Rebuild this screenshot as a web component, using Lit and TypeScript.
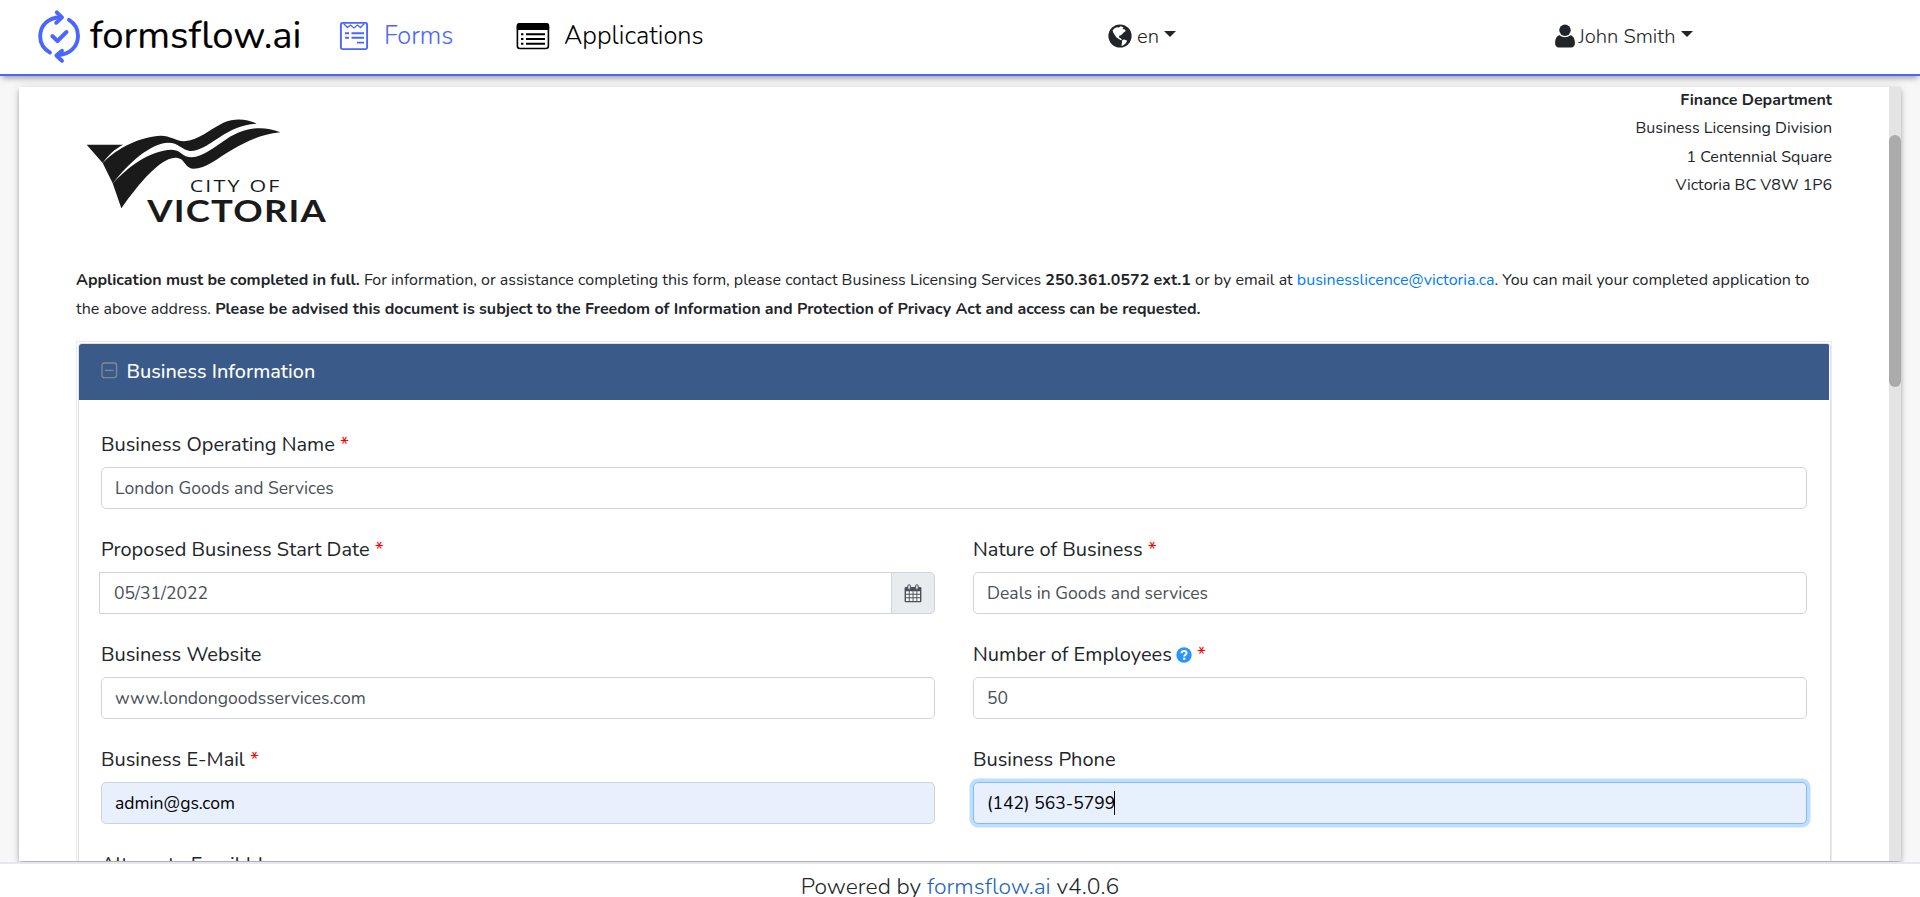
import { LitElement, html, css, svg, nothing } from "lit";
import { customElement, property } from "lit/decorators.js";
import { classMap } from "lit/directives/class-map.js";

const elevation = css`0 2px 4px -1px rgba(0, 0, 0, 0.2), 0 4px 5px 0 rgba(0, 0, 0, 0.14), 0 1px 10px 0 rgba(0, 0, 0, 0.12)`;

const syncLogo = html`<svg width="44" height="56" viewBox="0 0 44 56" fill="none" stroke="#4a66ff" stroke-width="3.9" stroke-linecap="round" stroke-linejoin="round">
  <path d="M13 44.6C6.500 40.800 3.200 35.500 3.200 28.500C3.200 17.500 11 9.800 23 9.200"/>
  <path d="M19.800 4.300L25 9.300L19.200 14.800"/>
  <path d="M32 11.800C37.800 15.500 41 21 41 27.700C41 38.600 33 46.400 21.500 47.200"/>
  <path d="M25 42.800L19.400 47.600L25 52.800"/>
  <path d="M15.300 28L20.500 33L29.500 24"/>
</svg>`;

const formsIcon = html`<svg width="30" height="30" viewBox="0 0 30 30" fill="none" stroke="#4a66ff">
  <rect x="1.900" y="1.900" width="26.200" height="26.200" rx="1.500" stroke-width="1.900"/>
  <path d="M4.500 2.500L8.500 6.500L11.500 4L15 7L18.500 4L21.500 6.500L25.500 2.500" stroke-width="1.300"/>
  <path d="M6 12.200h4M6 16.800h4M12.500 12.200h12.500M12.500 16.800h12.500M18 21.600h7" stroke-width="1.900"/>
</svg>`;

const listIcon = html`<svg width="34" height="28" viewBox="0 0 34 28">
  <rect x="1.400" y="1.900" width="31" height="24.600" rx="2.500" fill="#fff" stroke="#000" stroke-width="1.600"/>
  <path d="M.8 8V4a3 3 0 0 1 3-3h26.400a3 3 0 0 1 3 3v4z"/>
  <path d="M5 12.200h2.400M5 17h2.400M5 21.800h2.400M10 12.200h19M10 17h19M10 21.800h19" stroke="#000" stroke-width="2.100"/>
</svg>`;

const globeIcon = html`<svg width="24" height="24" viewBox="0 0 24 24">
  <circle cx="12" cy="12" r="11.600" fill="#212529"/>
  <path fill="#fff" d="M6.600 4.200L9 3.200L11 3.500L12.500 2.200L15.500 3.200L14.500 5L16.500 5.200L17.800 7L16 8.200L14.500 9.800L13 11.200L11.500 11.500L10.800 13.200L12.500 14.200L14 15.400L12.800 16.300L10.800 15L8.200 13.200L6.500 10.500L5.200 8.500L4.600 6.200z"/>
  <path fill="#fff" d="M14.200 16L16.300 15.400L19.200 16.800L18 19L15.500 21.200L13.500 22L13.800 19.500z"/>
</svg>`;

const userIcon = html`<svg width="20" height="24" viewBox="0 0 20 24" fill="#212529">
  <circle cx="10" cy="6.200" r="5.700"/>
  <path d="M4.600 11.300C6 12.600 7.900 13.300 10 13.300s4-.7 5.400-2C18.600 11.700 19.900 15.500 19.900 19.300c0 2.400-1.500 4.200-3.700 4.200H3.800C1.600 23.500.1 21.700.1 19.300C.1 15.500 1.400 11.700 4.600 11.300z"/>
</svg>`;

const minusIcon = html`<svg width="17" height="17" viewBox="0 0 17 17" fill="none" stroke="#818a91" stroke-width="1.300">
  <rect x="1" y="1" width="14.600" height="14.600" rx="2.300"/><path d="M4 8.300h8.600"/>
</svg>`;

const calendarIcon = html`<svg width="18" height="19" viewBox="0 0 18 19">
  <rect x=".6" y="3" width="16.800" height="15.200" rx="1" fill="#495057"/>
  <path fill="#f5f7f9" d="M2 7.300h2.800v2.500H2zM5.700 7.300h2.900v2.500H5.700zM9.500 7.300h2.900v2.500H9.500zM13.300 7.300H16v2.500h-2.700zM2 10.700h2.800v2.600H2zM5.700 10.700h2.900v2.600H5.700zM9.500 10.700h2.900v2.600H9.500zM13.300 10.700H16v2.600h-2.700zM2 14.200h2.800v2.700H2zM5.700 14.200h2.900v2.700H5.700zM9.500 14.200h2.900v2.700H9.500zM13.300 14.200H16v2.700h-2.700z"/>
  <rect x="3.800" y=".8" width="2.600" height="4.600" rx="1.200" fill="#e9ecef" stroke="#495057" stroke-width="1"/>
  <rect x="11.600" y=".8" width="2.600" height="4.600" rx="1.200" fill="#e9ecef" stroke="#495057" stroke-width="1"/>
</svg>`;

const helpIcon = html`<svg width="16" height="16" viewBox="0 0 16 16">
  <circle cx="8" cy="8" r="7.700" fill="#2b95ff"/>
  <path d="M5.500 6.200C5.600 4.600 6.600 3.900 8 3.900c1.500 0 2.600.8 2.600 2.100C10.600 7.700 8.200 7.700 8.200 9.600" fill="none" stroke="#fff" stroke-width="2"/>
  <rect x="7.100" y="10.700" width="2.200" height="2" fill="#fff"/>
</svg>`;

const cityLogo = html`<svg width="300" height="140" viewBox="0 0 900 420" fill="#1a1a1a">
  <path d="M80 134H190C165 146 146 164 128 189z"/>
  <path d="M128 189C160 155 225 112 300 107C330 106 345 122 372 124C415 121 450 88 490 68C525 53 560 56 590 71C545 74 515 88 480 111C440 137 415 154 390 153C365 149 355 128 325 128C270 130 205 190 158 250z"/>
  <path d="M158 250C205 200 270 151 335 149C365 150 365 172 395 172C430 170 465 140 500 117C545 88 600 72 661 97C600 104 560 124 515 150C470 176 440 206 400 206C370 203 378 173 345 173C300 176 240 245 184 325z"/>
  ${svg`<text class="city" x="389" y="276" textLength="276" lengthAdjust="spacingAndGlyphs">CITY OF</text>
  <text class="name" x="262" y="365" textLength="539" lengthAdjust="spacingAndGlyphs">VICTORIA</text>`}
</svg>`;

@customElement("form-field")
class FormField extends LitElement {
  @property() label = "";
  @property() value = "";
  @property({ type: Boolean }) required = false;
  @property({ type: Boolean }) help = false;
  @property({ type: Boolean }) date = false;
  @property({ type: Boolean }) autofilled = false;
  @property({ type: Boolean }) active = false;

  static styles = css`
    :host { display: flex; flex-direction: column; gap: 7px; height: 105px; box-sizing: border-box; min-width: 0; }
    .label { height: 30px; font-size: 20px; line-height: 30px; white-space: pre; color: #212529; }
    .label svg { vertical-align: -2px; margin-left: 4px; }
    .star { color: #f00; }
    .group { display: flex; height: 42px; }
    .group.date { margin-left: -2px; }
    .control { flex: 1; display: flex; align-items: center; box-sizing: border-box; padding: 0 13px; border: 1px solid #ced4da; border-radius: 5px; background: #fff; color: #495057; font-size: 17.550px; }
    .date .control { border-radius: 0; border-right: 0; padding-left: 14px; }
    .control.autofilled { background: #e8effd; color: #000; }
    .control.active { border-color: #80bdff; box-shadow: 0 0 0 3.500px rgba(0, 123, 255, 0.25); }
    .caret { width: 1px; height: 24px; margin-left: -1px; background: #000; }
    .addon { display: flex; align-items: center; justify-content: center; width: 44px; box-sizing: border-box; border: 1px solid #ced4da; border-radius: 0 5px 5px 0; background: #e9ecef; }
  `;

  render() {
    return html`
      <div class="label">${this.label}${this.help ? helpIcon : nothing}${this.required ? html`<span class="star"> *</span>` : nothing}</div>
      <div class=${classMap({ group: true, date: this.date })}>
        <div class=${classMap({ control: true, autofilled: this.autofilled, active: this.active })}>
          <span>${this.value}</span>${this.active ? html`<span class="caret"></span>` : nothing}
        </div>
        ${this.date ? html`<span class="addon">${calendarIcon}</span>` : nothing}
      </div>`;
  }
}

@customElement("app-root")
class AppRoot extends LitElement {
  static styles = css`
    :host { display: flex; flex-direction: column; height: 897px; overflow: hidden; background: #f7f7f7; color: #212529; font-family: Nunito, Lato, sans-serif; font-size: 16px; font-weight: 395; }
    svg { display: block; flex: none; }
    b { font-weight: 700; }
    header { flex: none; position: relative; z-index: 1; display: flex; align-items: center; box-sizing: border-box; height: 76px; padding: 0 0 3px 37px; background: #fff; border-bottom: 2px solid #4a66ff; box-shadow: 0 4px 6px -2px rgba(0, 0, 0, 0.38); white-space: nowrap; }
    .brand { display: flex; align-items: center; width: 302px; gap: 9px; font-size: 38.300px; color: #000; font-weight: 400; line-height: 50px; -webkit-text-stroke: 0.150px #000; }
    .nav { display: flex; align-items: center; font-size: 25.400px; color: #000; font-weight: 330; }
    .nav.forms { width: 177px; gap: 15px; color: #4a66ff; }
    .nav.apps { width: 592px; gap: 14px; }
    .menu { display: flex; align-items: center; gap: 5px; font-size: 20.200px; padding-top: 1px; font-weight: 345; }
    .menu.lang { width: 446.500px; }
    .menu.user { gap: 4px; }
    .arrow { margin: -4px 0 0 2px; border: 6px solid transparent; border-top-color: #212529; border-bottom: 0; }
    .lang .arrow { margin-left: 0; }
    main { flex: 1; min-height: 0; overflow: hidden; padding: 11px 19px 1px; }
    .panel { display: flex; height: 774px; background: #fff; box-shadow: ${elevation}; }
    .content { flex: 1; overflow: hidden; padding: 0 57px; }
    .track { width: 12px; background: #e4e4e4; }
    .thumb { height: 252px; margin-top: 48px; border-radius: 6px; background: #ababab; }
    .top { display: flex; justify-content: space-between; height: 178.500px; line-height: 28.500px; }
    .top svg { margin: 13px 0 0 -16px; }
    .city { font: 49px "Open Sans", sans-serif; letter-spacing: 5px; }
    .name { font: 700 92px Lato, sans-serif; letter-spacing: 3px; }
    .address { margin-top: -1.400px; text-align: right; }
    .intro { margin: 0; line-height: 29px; height: 75.500px; }
    a { color: #007bff; text-decoration: none; }
    .card { padding: 1px 0 0 1px; border: 1px solid #e9e9ef; }
    .inner { border: 1px solid #dfdfe7; border-radius: 4px 4px 0 0; overflow: hidden; }
    .title { display: flex; align-items: center; gap: 8.500px; height: 56px; margin-right: 1px; padding: 0 22px; box-sizing: border-box; background: #3a5a89; color: #fff; font-size: 19.850px; font-weight: 480; }
    .title svg { margin-top: -3px; }
    .title span { margin-top: -2px; }
    .fields { display: grid; grid-template-columns: 1fr 1fr; column-gap: 38px; padding: 30px 23px 0 22px; }
    .wide { grid-column: 1 / -1; }
    footer { flex: none; height: 35px; box-sizing: border-box; border-top: 2px solid #e7e7ee; background: #fff; text-align: center; font-size: 22.900px; font-weight: 340; line-height: 46px; }
    footer a { color: #1f64bd; }
  `;

  render() {
    return html`
      <header>
        <div class="brand">${syncLogo}<span>formsflow.ai</span></div>
        <div class="nav forms">${formsIcon}<span>Forms</span></div>
        <div class="nav apps">${listIcon}<span>Applications</span></div>
        <div class="menu lang">${globeIcon}<span>en</span><i class="arrow"></i></div>
        <div class="menu user">${userIcon}<span>John Smith</span><i class="arrow"></i></div>
      </header>
      <main>
        <div class="panel">
          <div class="content">
            <div class="top">
              ${cityLogo}
              <div class="address">
                <b>Finance Department</b><br />Business Licensing Division<br />1 Centennial Square<br />Victoria BC V8W 1P6
              </div>
            </div>
            <p class="intro">
              <b>Application must be completed in full.</b> For information, or assistance completing this form, please contact Business Licensing Services <b>250.361.0572 ext.1</b> or by email at <a>businesslicence@victoria.ca</a>. You can mail your completed application to<br />the above address. <b>Please be advised this document is subject to the Freedom of Information and Protection of Privacy Act and access can be requested.</b>
            </p>
            <div class="card">
              <div class="inner">
                <div class="title">${minusIcon}<span>Business Information</span></div>
                <div class="fields">
                  <form-field class="wide" label="Business Operating Name" value="London Goods and Services" required></form-field>
                  <form-field label="Proposed Business Start Date" value="05/31/2022" required date></form-field>
                  <form-field label="Nature of Business" value="Deals in Goods and services" required></form-field>
                  <form-field label="Business Website" value="www.londongoodsservices.com"></form-field>
                  <form-field label="Number of Employees" value="50" help required></form-field>
                  <form-field label="Business E-Mail" value="admin@gs.com" required autofilled></form-field>
                  <form-field label="Business Phone" value="(142) 563-5799" autofilled active></form-field>
                  <form-field label="Alternate Email Id"></form-field>
                </div>
              </div>
            </div>
          </div>
          <div class="track"><div class="thumb"></div></div>
        </div>
      </main>
      <footer>Powered by <a>formsflow.ai</a> v4.0.6</footer>`;
  }
}
